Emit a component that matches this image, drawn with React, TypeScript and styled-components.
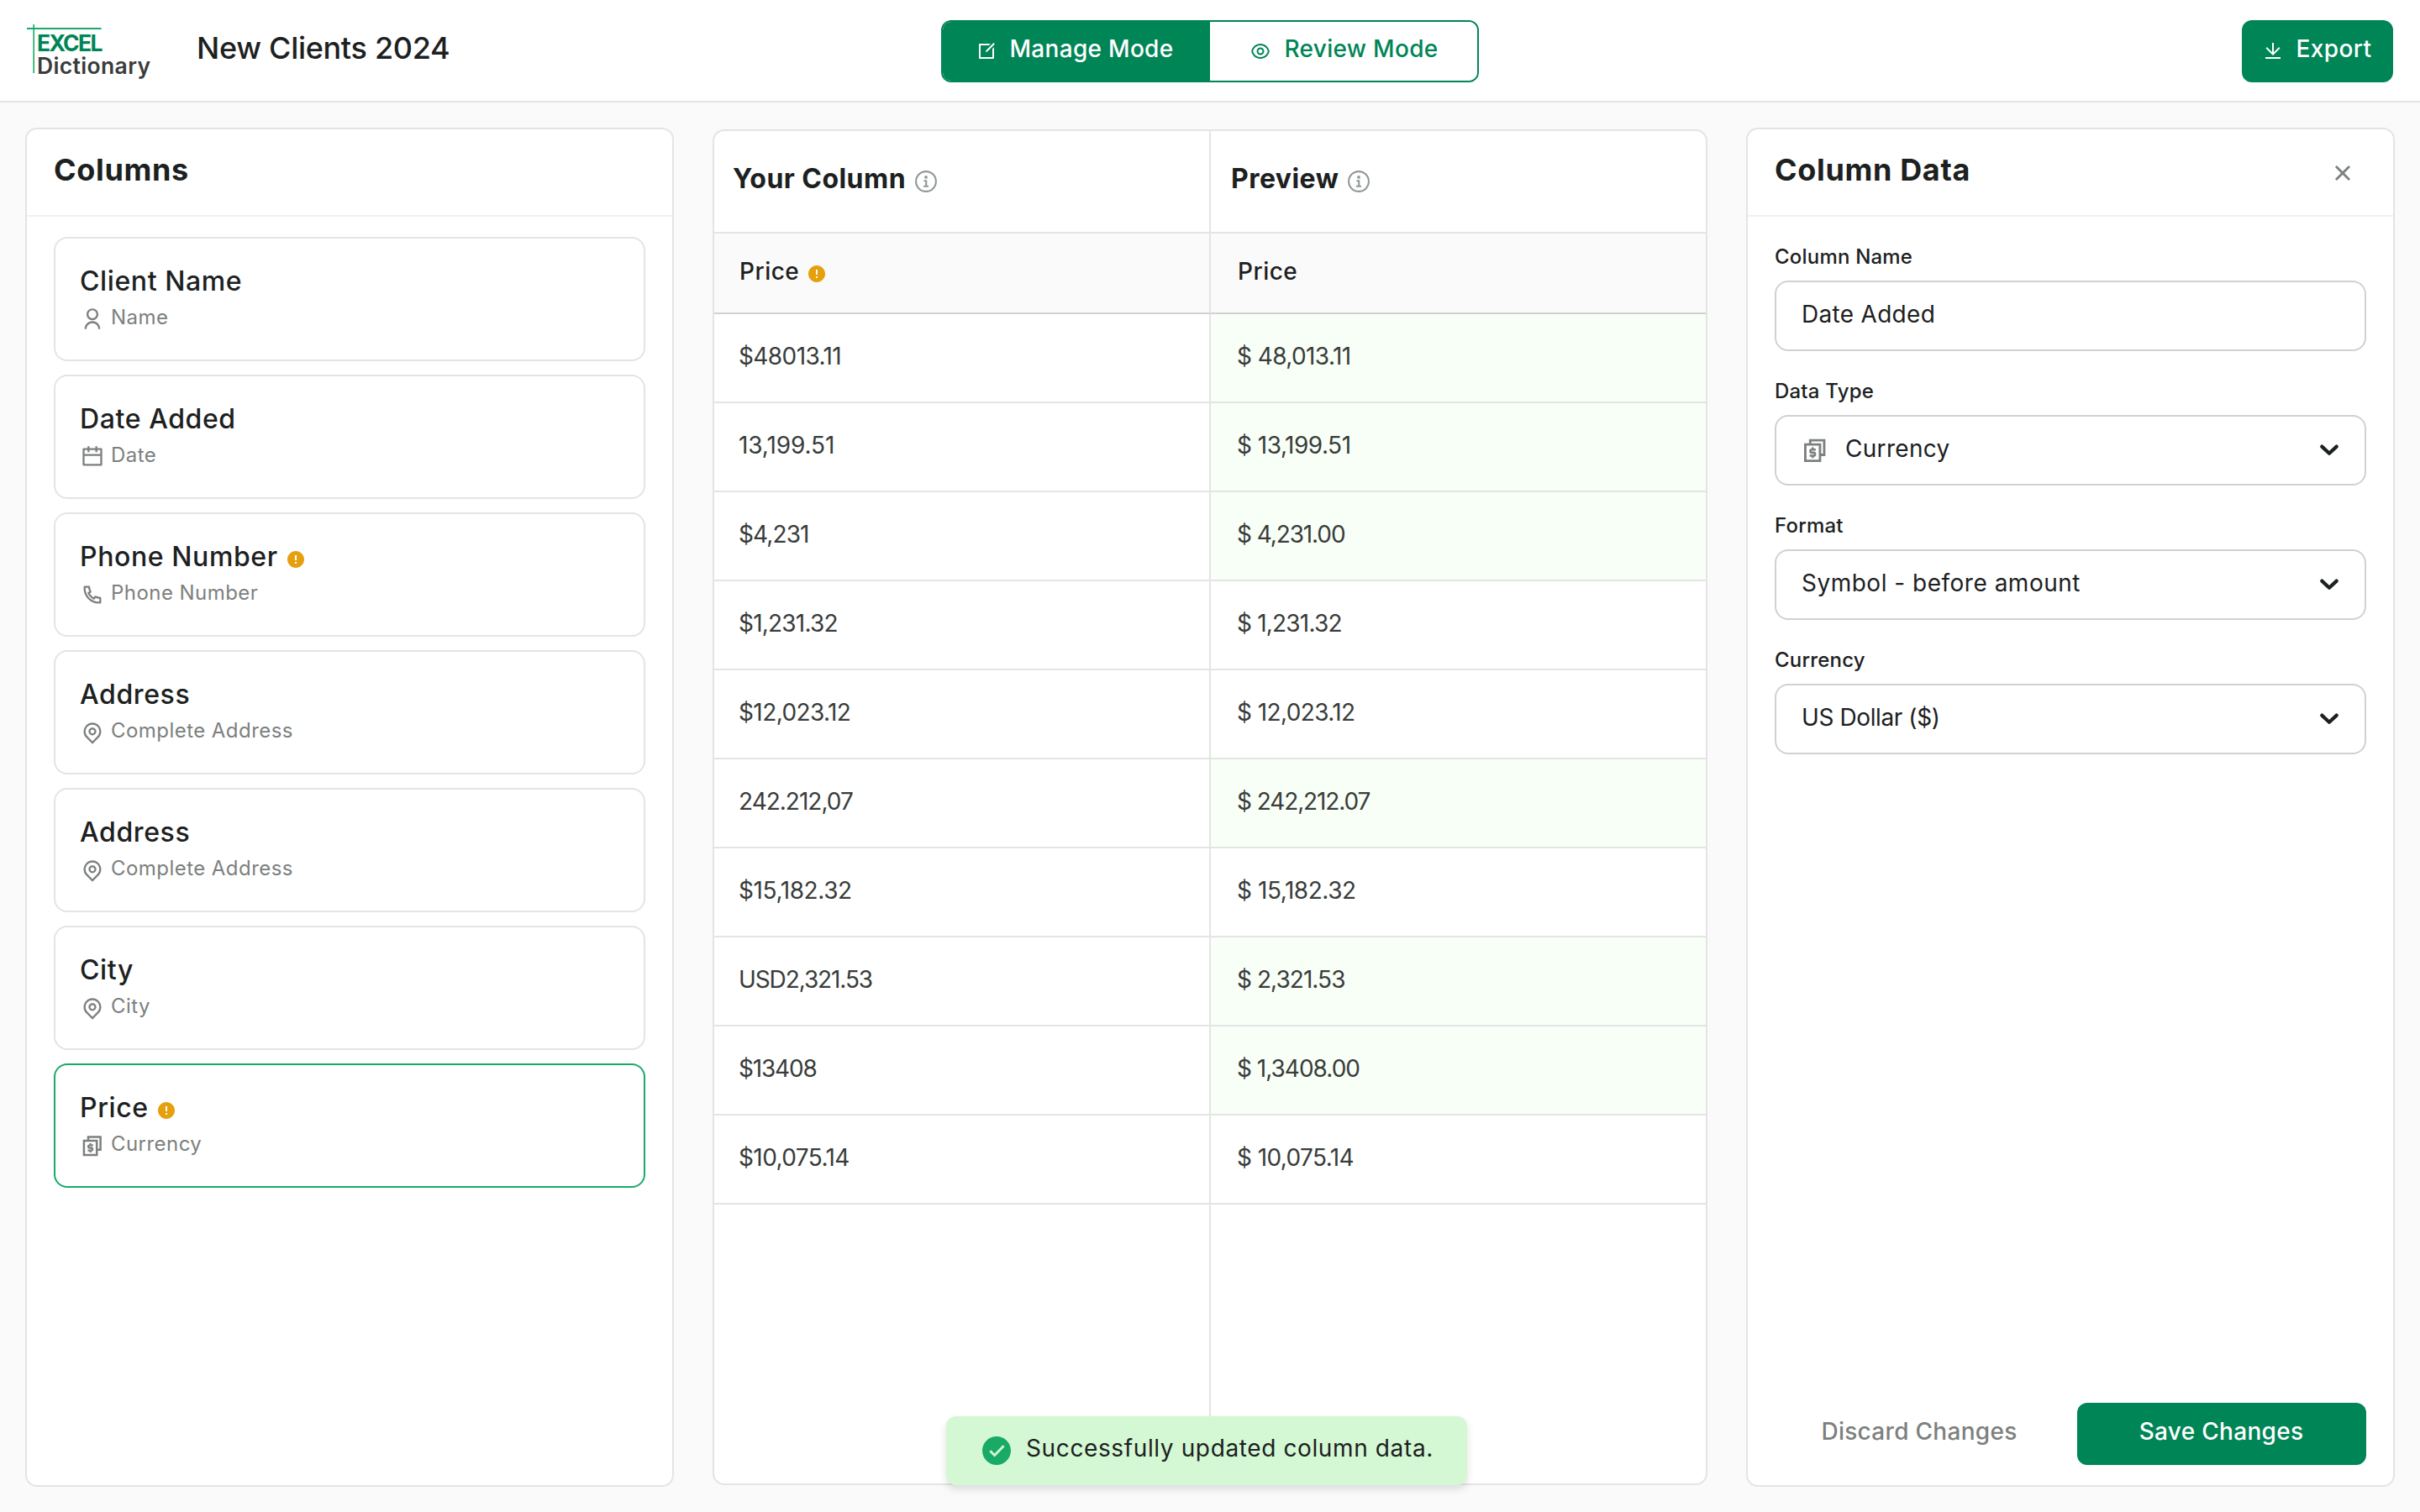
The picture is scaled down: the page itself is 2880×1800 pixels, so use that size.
import React from "react";
import styled, { createGlobalStyle, css } from "styled-components";
import {
  RiCalendarLine,
  RiCloseLine,
  RiDownloadLine,
  RiEditBoxLine,
  RiErrorWarningFill,
  RiEyeLine,
  RiMapPinLine,
  RiPhoneLine,
  RiUserLine,
} from "react-icons/ri";

const color = {
  green: "#008556",
  greenBright: "#1aaa67",
  ink: "#1c211f",
  body: "#383c3a",
  muted: "#7c807e",
  line: "#e4e4e4",
  lineSoft: "#f1f1f1",
  lineStrong: "#d1d1d1",
  page: "#fafafa",
  tint: "#f8fff7",
  toast: "#d4f8d4",
  warning: "#e5a00d",
};

const GlobalStyle = createGlobalStyle`
  *, *::before, *::after { box-sizing: border-box; }
  body {
    margin: 0;
    background: ${color.page};
    color: ${color.ink};
    font-family: Inter, "Liberation Sans", sans-serif;
    font-size: 28px;
    line-height: 34px;
  }
  button { font: inherit; }
`;

const Page = styled.div`
  position: relative;
  display: flex;
  flex-direction: column;
  width: 2880px;
  height: 1800px;
  overflow: hidden;
`;

/* ---------- Header ---------- */

const Header = styled.header`
  display: grid;
  grid-template-columns: 1fr 640px 1fr;
  align-items: start;
  flex: none;
  height: 122px;
  padding: 24px 32px 0;
  background: #fff;
  border-bottom: 2px solid ${color.line};
`;

const Brand = styled.div`
  display: flex;
  align-items: flex-start;
  gap: 56px;
`;

const Logo = styled.div`
  position: relative;
  width: 146px;
  height: 70px;
  padding: 14px 0 0 12px;
  font-size: 26.5px;
  line-height: 26.5px;
  white-space: nowrap;
`;

const LogoRules = styled.svg`
  position: absolute;
  left: 0;
  top: 5px;
`;

const LogoTop = styled.div`
  color: ${color.green};
  font-weight: 700;
  letter-spacing: -1.6px;
`;

const LogoBottom = styled.div`
  color: #3a3c3b;
  font-weight: 600;
  letter-spacing: 0.35px;
`;

const FileName = styled.h1`
  margin: 11px 0 0;
  font-size: 36px;
  line-height: 44px;
  font-weight: 500;
  letter-spacing: -0.3px;
`;

const Toggle = styled.div`
  display: grid;
  grid-template-columns: 1fr 1fr;
  height: 74px;
  border: 2px solid ${color.green};
  border-radius: 12px;
  overflow: hidden;
`;

const ToggleOption = styled.button<{ $active?: boolean }>`
  display: flex;
  align-items: center;
  justify-content: center;
  gap: 16px;
  padding: ${(p) => (p.$active ? "0 4px 0 0" : "0 0 0 2px")};
  border: 0;
  font-weight: 500;
  color: ${(p) => (p.$active ? "#fff" : color.green)};
  background: ${(p) => (p.$active ? color.green : "#fff")};
`;

const Label = styled.span<{ $tracking?: number }>`
  padding-bottom: 6px;
  letter-spacing: ${(p) => p.$tracking ?? 0.3}px;
  white-space: nowrap;
`;

const SolidButton = styled.button<{ $width: number }>`
  display: flex;
  align-items: center;
  justify-content: center;
  gap: 16px;
  width: ${(p) => p.$width}px;
  height: 74px;
  padding: 0 1px 0 0;
  border: 0;
  border-radius: 12px;
  color: #fff;
  background: ${color.green};
  font-weight: 500;
`;

const ExportButton = styled(SolidButton)`
  justify-self: end;
`;

/* ---------- Panels ---------- */

const Main = styled.main`
  display: grid;
  grid-template-columns: 772px 1184px 772px;
  gap: 46px;
  flex: 1;
  padding: 30px;
`;

const Panel = styled.section`
  display: flex;
  flex-direction: column;
  background: #fff;
  border: 2px solid ${color.line};
  border-radius: 14px;
`;

const PanelHeader = styled.div`
  display: flex;
  justify-content: space-between;
  flex: none;
  height: 104px;
  padding: 26px 43px 0 32px;
  border-bottom: 2px solid ${color.lineSoft};
  color: ${color.muted};

  svg {
    margin-top: 9px;
  }
`;

const PanelTitle = styled.h2`
  margin: 0;
  color: ${color.ink};
  font-size: 36px;
  line-height: 44px;
  font-weight: 700;
  letter-spacing: 0.65px;
`;

const CardList = styled.div`
  display: flex;
  flex-direction: column;
  gap: 16px;
  padding: 24px 32px;
`;

const Card = styled.div<{ $selected?: boolean }>`
  height: 148px;
  padding: 31px 28px 0 29px;
  border: 2px solid ${(p) => (p.$selected ? color.greenBright : color.line)};
  border-radius: 16px;
`;

const Warning = styled(RiErrorWarningFill)<{ $drop: number }>`
  flex: none;
  margin-top: ${(p) => p.$drop}px;
  color: ${color.warning};
`;

const CardTitle = styled.div`
  display: flex;
  align-items: center;
  gap: 9px;
  font-size: 32px;
  line-height: 40px;
  font-weight: 500;
  letter-spacing: 0.6px;
`;

const CardType = styled.div`
  display: flex;
  align-items: center;
  gap: 8px;
  height: 30px;
  margin: 8px 0 0 1px;
  color: ${color.muted};
  font-size: 24px;
  line-height: 30px;
  letter-spacing: 0.45px;

  svg {
    margin-top: 4px;
  }
`;

/* ---------- Table ---------- */

const Table = styled.section`
  display: grid;
  grid-template-columns: 591px 1fr;
  grid-template-rows: 122px 96px repeat(10, 106px) 1fr;
  margin: 2px 0;
  background: #fff;
  border: 2px solid ${color.line};
  border-radius: 14px;
  overflow: hidden;
`;

const cell = css`
  display: flex;
  align-items: flex-start;
  border-bottom: 2px solid ${color.line};

  &:nth-child(odd) {
    border-right: 2px solid ${color.line};
  }
`;

const HeadCell = styled.div`
  ${cell}
  gap: 11px;
  padding: 37px 22px 0;
  font-size: 32px;
  line-height: 40px;
  font-weight: 700;
  letter-spacing: 0.45px;

  &:nth-child(even) {
    padding-left: 24px;
  }

  svg {
    margin-top: 10px;
  }
`;

const NameCell = styled.div`
  ${cell}
  border-bottom-color: ${color.lineStrong};
  padding: 28px 29px 0 30px;
  gap: 9px;
  background: ${color.page};
  font-weight: 500;
  letter-spacing: 0.5px;

  &:nth-child(even) {
    padding-left: 32px;
  }
`;

const ValueCell = styled.div<{ $changed?: boolean; $tracking: number }>`
  ${cell}
  padding: 33px 29px 0;
  color: ${color.body};
  background: ${(p) => (p.$changed ? color.tint : "#fff")};
  letter-spacing: ${(p) => p.$tracking}px;

  &:nth-child(even) {
    padding-left: 31px;
  }
`;

const FillCell = styled.div`
  ${cell}
  border-bottom: 0;
`;

/* ---------- Form ---------- */

const Form = styled.div`
  display: flex;
  flex-direction: column;
  gap: 33px;
  flex: 1;
  padding: 33px 32px 32px;
`;

const Field = styled.div`
  display: flex;
  flex-direction: column;
  gap: 13px;
`;

const FieldLabel = styled.label`
  font-size: 24px;
  line-height: 30px;
  font-weight: 500;
  letter-spacing: 0.2px;
`;

const Control = styled.div`
  display: flex;
  align-items: center;
  height: 84px;
  padding: 0 31px 0 30px;
  border: 2px solid ${color.lineStrong};
  border-radius: 16px;
`;

const ControlIcon = styled.span`
  display: flex;
  margin-right: 20px;
  color: ${color.muted};
`;

const ControlText = styled.span<{ $tracking?: number }>`
  flex: 1;
  padding-bottom: 4px;
  letter-spacing: ${(p) => p.$tracking ?? 0.3}px;
`;

const Actions = styled.div`
  display: grid;
  grid-template-columns: 1fr 344px;
  gap: 16px;
  padding: 0 32px 24px;
`;

const PlainButton = styled.button`
  display: flex;
  align-items: center;
  justify-content: center;
  height: 74px;
  border: 0;
  background: none;
  color: ${color.muted};
  font-weight: 500;
`;

/* ---------- Toast ---------- */

const Toast = styled.div`
  position: absolute;
  left: 1126px;
  bottom: 32px;
  display: flex;
  align-items: center;
  gap: 18px;
  width: 620px;
  height: 82px;
  padding-left: 43px;
  border-radius: 12px;
  background: ${color.toast};
  box-shadow: 0 5px 10px rgba(0, 0, 0, 0.12);
  white-space: nowrap;
`;

/* ---------- Icons ---------- */

const CurrencyIcon = ({ size = 28 }: { size?: number }) => (
  <svg width={size} height={size} viewBox="0 0 28 28" fill="none" stroke="currentColor" strokeWidth="2.5">
    <path d="M9 8V3.6h14.6v15.2h-4.4" />
    <path d="M3.9 8h15.3v17H3.9z" />
    <path d="M14.8 13.3h-4.1a1.6 1.6 0 0 0 0 3.2h1.8a1.6 1.6 0 0 1 0 3.2H8.4M11.6 11v2.3M11.6 19.7V22" strokeWidth="2.3" />
  </svg>
);

const InfoIcon = () => (
  <svg width="26" height="26" viewBox="0 0 26 26" fill="none" stroke="#8f9996" strokeWidth="2.1">
    <circle cx="13" cy="13" r="11.9" />
    <circle cx="13" cy="7.9" r="1.9" fill="#8f9996" stroke="none" />
    <path d="M10.4 12.2h2.8v6.4M10 18.8h6" />
  </svg>
);

const Chevron = () => (
  <svg width="22" height="14" viewBox="0 0 22 14" fill="none" stroke={color.ink} strokeWidth="4.2" strokeLinecap="round" strokeLinejoin="round">
    <path d="M2.3 2.6 11 10.8l8.7-8.2" />
  </svg>
);

const SuccessIcon = () => (
  <svg width="34" height="34" viewBox="0 0 34 34" fill="none">
    <circle cx="17" cy="17" r="17" fill={color.greenBright} />
    <path d="m9.3 17.2 5.3 5.2 11-11.2" stroke={color.toast} strokeWidth="2.8" />
  </svg>
);

/* ---------- Data ---------- */

const columns = [
  { title: "Client Name", type: "Name", icon: <RiUserLine size={28} /> },
  { title: "Date Added", type: "Date", icon: <RiCalendarLine size={28} /> },
  { title: "Phone Number", type: "Phone Number", icon: <RiPhoneLine size={28} />, warning: true },
  { title: "Address", type: "Complete Address", icon: <RiMapPinLine size={28} /> },
  { title: "Address", type: "Complete Address", icon: <RiMapPinLine size={28} /> },
  { title: "City", type: "City", icon: <RiMapPinLine size={28} /> },
  { title: "Price", type: "Currency", icon: <CurrencyIcon />, warning: true, selected: true },
];

// Each value is a [text, letter spacing] pair.
const rows: { source: [string, number]; preview: [string, number]; changed?: boolean }[] = [
  { source: ["$48013.11", -0.6], preview: ["$ 48,013.11", -0.6], changed: true },
  { source: ["13,199.51", -0.1], preview: ["$ 13,199.51", -0.5], changed: true },
  { source: ["$4,231", -0.9], preview: ["$ 4,231.00", -1.1], changed: true },
  { source: ["$1,231.32", -0.8], preview: ["$ 1,231.32", -0.8] },
  { source: ["$12,023.12", -0.6], preview: ["$ 12,023.12", -0.6] },
  { source: ["242.212,07", -1], preview: ["$ 242,212.07", -1.1], changed: true },
  { source: ["$15,182.32", -0.4], preview: ["$ 15,182.32", -0.45] },
  { source: ["USD2,321.53", -1.1], preview: ["$ 2,321.53", -0.95], changed: true },
  { source: ["$13408", -1.2], preview: ["$ 1,3408.00", -1], changed: true },
  { source: ["$10,075.14", -0.6], preview: ["$ 10,075.14", -0.6] },
];

const fields = [
  { label: "Column Name", value: "Date Added" },
  { label: "Data Type", value: "Currency", icon: <CurrencyIcon size={32} />, select: true },
  { label: "Format", value: "Symbol - before amount", select: true, tracking: 0.5 },
  { label: "Currency", value: "US Dollar ($)", select: true, tracking: -0.4 },
];

export default function App() {
  return (
    <Page>
      <GlobalStyle />
      <Header>
        <Brand>
          <Logo>
            <LogoRules width="90" height="60" viewBox="0 0 90 60">
              <path d="M0 5h88.5" stroke={color.greenBright} strokeWidth="2" />
              <path d="M8.2 0v58" stroke={color.greenBright} strokeWidth="1.6" />
            </LogoRules>
            <LogoTop>EXCEL</LogoTop>
            <LogoBottom>Dictionary</LogoBottom>
          </Logo>
          <FileName>New Clients 2024</FileName>
        </Brand>
        <Toggle>
          <ToggleOption $active>
            <RiEditBoxLine size={24} />
            <Label>Manage Mode</Label>
          </ToggleOption>
          <ToggleOption>
            <RiEyeLine size={24} />
            <Label>Review Mode</Label>
          </ToggleOption>
        </Toggle>
        <ExportButton $width={180}>
          <RiDownloadLine size={24} />
          <Label $tracking={0.4}>Export</Label>
        </ExportButton>
      </Header>
      <Main>
        <Panel>
          <PanelHeader>
            <PanelTitle>Columns</PanelTitle>
          </PanelHeader>
          <CardList>
            {columns.map((c, i) => (
              <Card key={i} $selected={c.selected}>
                <CardTitle>
                  {c.title}
                  {c.warning && <Warning size={24} $drop={6} />}
                </CardTitle>
                <CardType>
                  {c.icon}
                  {c.type}
                </CardType>
              </Card>
            ))}
          </CardList>
        </Panel>
        <Table>
          <HeadCell>
            Your Column <InfoIcon />
          </HeadCell>
          <HeadCell>
            Preview <InfoIcon />
          </HeadCell>
          <NameCell>
            Price <Warning size={24} $drop={8} />
          </NameCell>
          <NameCell>Price</NameCell>
          {rows.map((r, i) => (
            <React.Fragment key={i}>
              <ValueCell $tracking={r.source[1]}>{r.source[0]}</ValueCell>
              <ValueCell $tracking={r.preview[1]} $changed={r.changed}>
                {r.preview[0]}
              </ValueCell>
            </React.Fragment>
          ))}
          <FillCell />
          <FillCell />
        </Table>
        <Panel>
          <PanelHeader>
            <PanelTitle>Column Data</PanelTitle>
            <RiCloseLine size={34} />
          </PanelHeader>
          <Form>
            {fields.map((f) => (
              <Field key={f.label}>
                <FieldLabel>{f.label}</FieldLabel>
                <Control>
                  {f.icon && <ControlIcon>{f.icon}</ControlIcon>}
                  <ControlText $tracking={f.tracking}>{f.value}</ControlText>
                  {f.select && <Chevron />}
                </Control>
              </Field>
            ))}
          </Form>
          <Actions>
            <PlainButton>
              <Label>Discard Changes</Label>
            </PlainButton>
            <SolidButton $width={344}>
              <Label>Save Changes</Label>
            </SolidButton>
          </Actions>
        </Panel>
      </Main>
      <Toast>
        <SuccessIcon />
        <Label $tracking={0.62}>Successfully updated column data.</Label>
      </Toast>
    </Page>
  );
}
